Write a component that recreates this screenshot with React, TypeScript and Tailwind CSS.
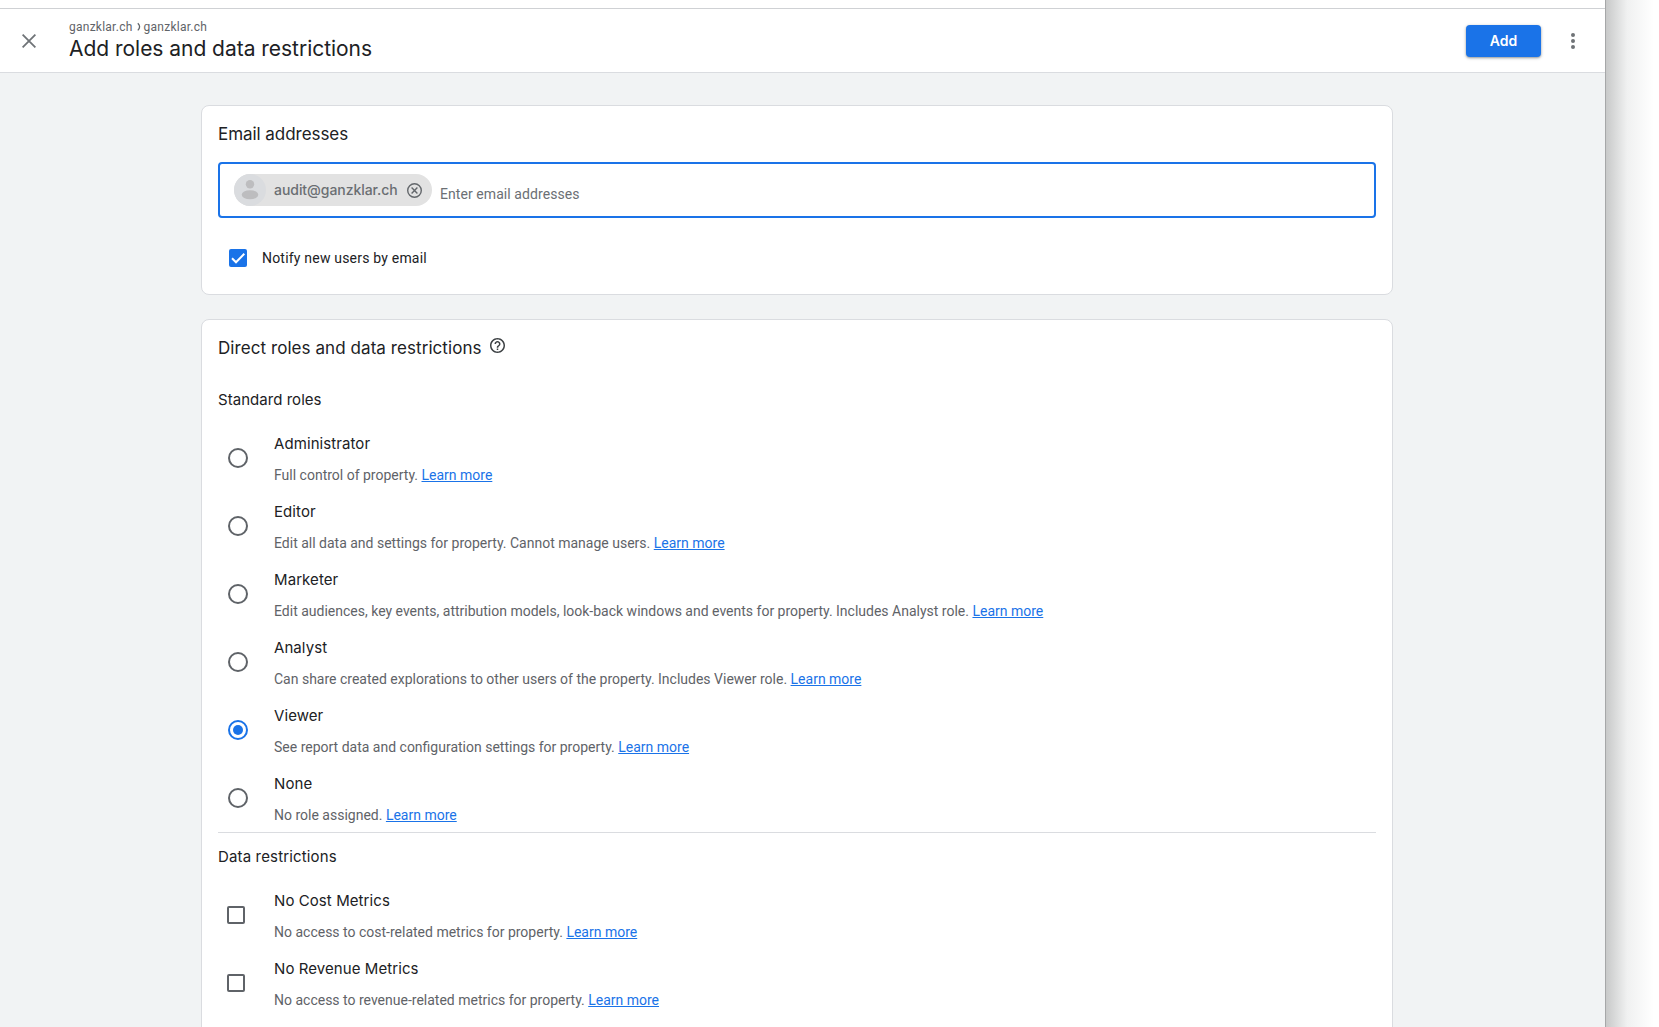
import { clsx } from 'clsx';

const roles = [
  { name: 'Administrator', text: 'Full control of property.' },
  { name: 'Editor', text: 'Edit all data and settings for property. Cannot manage users.' },
  {
    name: 'Marketer',
    text: 'Edit audiences, key events, attribution models, look-back windows and events for property. Includes Analyst role.',
  },
  { name: 'Analyst', text: 'Can share created explorations to other users of the property. Includes Viewer role.' },
  { name: 'Viewer', text: 'See report data and configuration settings for property.', selected: true },
  { name: 'None', text: 'No role assigned.' },
];

const restrictions = [
  { name: 'No Cost Metrics', text: 'No access to cost-related metrics for property.' },
  { name: 'No Revenue Metrics', text: 'No access to revenue-related metrics for property.' },
];

function Radio({ selected }: { selected?: boolean }) {
  return (
    <span
      className={clsx(
        'ml-2.5 flex size-5 items-center justify-center rounded-full border-2',
        selected ? 'border-[#1a73e8]' : 'border-[#5f6368]'
      )}
    >
      {selected && <span className="size-2.5 rounded-full bg-[#1a73e8]" />}
    </span>
  );
}

function OptionRow({ name, text, control }: { name: string; text: string; control: React.ReactNode }) {
  return (
    <li className="flex h-[68px] items-center">
      <div className="w-14 shrink-0">{control}</div>
      <div>
        <div className="font-['Inter'] text-[15px] leading-6 tracking-[0.08px] text-[#202124]">{name}</div>
        <p className="mt-[9px] text-sm leading-5 text-[#5f6368]">
          {text}{' '}
          <a href="#" className="text-[#1a73e8] underline">Learn more</a>
        </p>
      </div>
    </li>
  );
}

function Header() {
  return (
    <header className="flex h-[65px] shrink-0 items-start border-y border-[#dadce0] border-t-[#cfd1d4] bg-white">
      <button className="mt-[25px] ml-[22px]" aria-label="Close">
        <svg className="size-3.5" viewBox="0 0 14 14" stroke="#6f7377" strokeWidth="1.8">
          <path d="M.6.6l12.8 12.8M13.4.6L.6 13.4" />
        </svg>
      </button>
      <div className="mt-[10px] ml-[33px]">
        <div className="flex items-center text-xs leading-4 tracking-[0.25px] text-[#5f6368]">
          ganzklar.ch
          <svg className="mr-[3px] ml-1 h-2.5 w-1" viewBox="0 0 4 10" fill="none" stroke="#5f6368" strokeWidth="1.3">
            <path d="M.8 1.2Q4.400 4.600 .8 8.400" />
          </svg>
          ganzklar.ch
        </div>
        <h1 className="mt-px font-['Inter'] text-[21px] leading-[26px] tracking-[-0.03px] text-[#202124]">
          Add roles and data restrictions
        </h1>
      </div>
      <button className="mt-4 mr-[30px] ml-auto h-8 w-[75px] rounded bg-[#1a73e8] font-['Inter'] text-sm font-semibold text-white shadow-[0_1px_2px_rgba(60,64,67,0.4),0_1px_3px_1px_rgba(60,64,67,0.15)]">
        Add
      </button>
      <button className="mt-6 mr-[30px]" aria-label="More">
        <svg className="h-4 w-1" viewBox="0 0 4 16" fill="#6f7377">
          <circle cx="2" cy="2" r="2" />
          <circle cx="2" cy="8" r="2" />
          <circle cx="2" cy="14" r="2" />
        </svg>
      </button>
    </header>
  );
}

function EmailCard() {
  return (
    <section className="rounded-lg border border-[#dadce0] bg-white p-4">
      <h2 className="font-['Inter'] text-[17px] leading-6 tracking-[-0.05px] text-[#202124]">Email addresses</h2>
      <div className="mt-4 flex h-14 items-start rounded border-2 border-[#1a73e8] px-3.5 pt-2.5">
        <div className="flex h-8 w-[198px] items-center rounded-full bg-[#e2e2e2]">
          <svg className="size-8" viewBox="0 0 32 32">
            <circle cx="16" cy="16" r="16" fill="#dadcdf" />
            <circle cx="16" cy="10.300" r="4.200" fill="#bdbdbf" />
            <ellipse cx="16" cy="20.700" rx="8.300" ry="4.500" fill="#bdbdbf" />
          </svg>
          <span className="ml-2 font-['Inter'] text-sm font-medium tracking-[-0.05px] text-[#6a6e72]">
            audit@ganzklar.ch
          </span>
          <svg className="mr-2.5 ml-auto size-[15px]" viewBox="0 0 15 15" fill="none" stroke="#63676b" strokeWidth="1.4">
            <circle cx="7.500" cy="7.500" r="6.800" />
            <path d="M4.600 4.600l5.800 5.800M10.400 4.600l-5.800 5.800" />
          </svg>
        </div>
        <span className="mt-2.5 ml-2 text-sm leading-5 tracking-[0.07px] text-[#6b6f74]">Enter email addresses</span>
      </div>
      <label className="mt-5 flex h-10 items-center">
        <span className="ml-[11px] flex size-[18px] items-center justify-center rounded-xs bg-[#1a73e8]">
          <svg className="size-[18px]" viewBox="0 0 18 18" fill="none" stroke="#fff" strokeWidth="2">
            <path d="M3 9.300l4 4L15.300 4.800" />
          </svg>
        </span>
        <span className="ml-[15px] text-sm leading-5 tracking-[0.2px] text-[#202124]">Notify new users by email</span>
      </label>
    </section>
  );
}

function RolesCard() {
  return (
    <section className="mt-6 shrink-0 rounded-lg border border-[#dadce0] bg-white p-4 pb-16">
      <div className="flex">
        <h2 className="font-['Inter'] text-[17px] leading-6 tracking-[0.07px] text-[#202124]">
          Direct roles and data restrictions
        </h2>
        <svg className="mt-0.5 ml-2 size-[15px]" viewBox="2 2 20 20" fill="#3c4043">
          <path d="M11 18h2v-2h-2v2zm1-16C6.480 2 2 6.480 2 12s4.480 10 10 10 10-4.480 10-10S17.520 2 12 2zm0 18c-4.410 0-8-3.590-8-8s3.590-8 8-8 8 3.590 8 8-3.590 8-8 8zm0-14c-2.210 0-4 1.790-4 4h2c0-1.100.9-2 2-2s2 .9 2 2c0 2-3 1.750-3 5h2c0-2.250 3-2.500 3-5 0-2.210-1.790-4-4-4z" />
        </svg>
      </div>
      <h3 className="mt-7 font-['Inter'] text-[15px] leading-6 tracking-[0.04px] text-[#202124]">Standard roles</h3>
      <ul className="mt-3 border-b border-[#dadce0]">
        {roles.map(role => (
          <OptionRow key={role.name} name={role.name} text={role.text} control={<Radio selected={role.selected} />} />
        ))}
      </ul>
      <h3 className="mt-3 font-['Inter'] text-[15px] leading-6 tracking-[0.15px] text-[#202124]">Data restrictions</h3>
      <ul className="mt-3">
        {restrictions.map(item => (
          <OptionRow
            key={item.name}
            name={item.name}
            text={item.text}
            control={<span className="ml-[9px] block size-[18px] rounded-xs border-2 border-[#5f6368]" />}
          />
        ))}
      </ul>
    </section>
  );
}

export default function App() {
  return (
    <div className="flex h-[1027px] w-full overflow-hidden bg-white font-['Roboto',sans-serif]">
      <div className="flex w-[1605px] shrink-0 flex-col pt-2">
        <Header />
        <main className="flex min-h-0 flex-1 flex-col overflow-hidden bg-[#f1f3f4] pt-8 pr-[212px] pl-[201px]">
          <EmailCard />
          <RolesCard />
        </main>
      </div>
      {/* window edge and its drop shadow */}
      <div className="flex-1 border-l border-[#a6a7a8] bg-linear-to-r from-[#c8c9c9] via-[#f0f1f1] via-40% to-white to-90%" />
    </div>
  );
}
